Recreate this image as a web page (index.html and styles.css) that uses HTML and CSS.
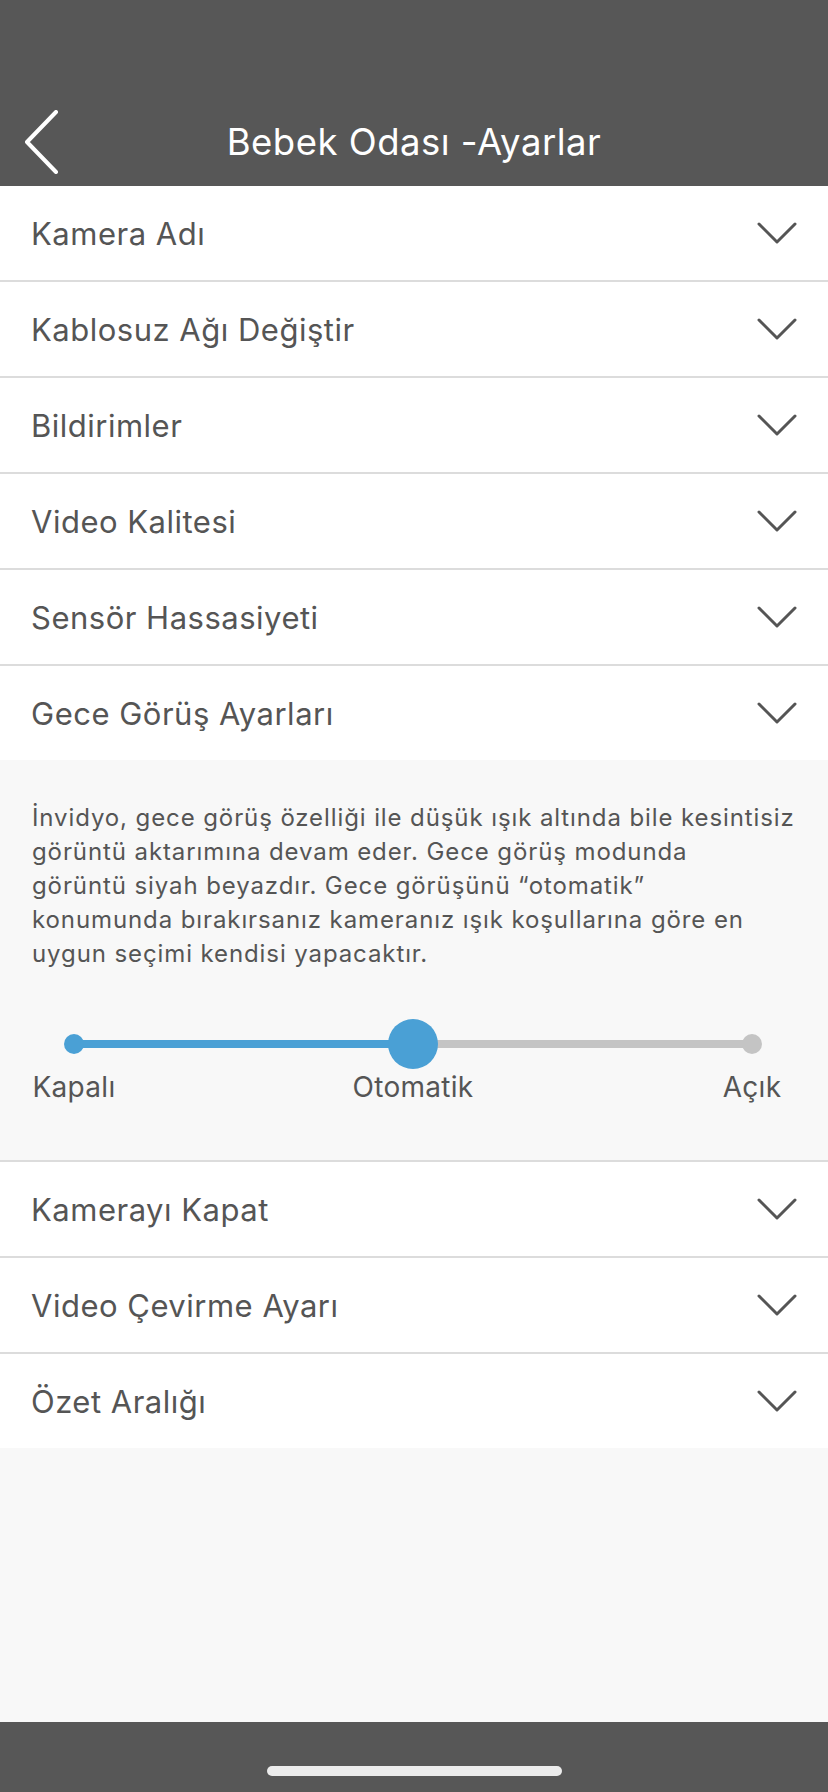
FILE: index.html
```html
<!DOCTYPE html>
<html lang="tr">
<head>
    <meta charset="UTF-8">
    <meta name="viewport" content="width=device-width, initial-scale=1.0">
    <title>Bebek Odası -Ayarlar</title>
    <link rel="stylesheet" href="styles.css">
</head>
<body>
    <header class="topbar">
        <div class="nav">
            <button class="back" type="button" aria-label="Geri">
                <svg width="36" height="64" viewBox="0 0 36 64">
                    <polyline points="33,2 4,32 33,62" fill="none" stroke="#fff" stroke-width="4" stroke-linecap="round" stroke-linejoin="round"/>
                </svg>
            </button>
            <h1 class="title">Bebek Odası -Ayarlar</h1>
            <span></span>
        </div>
    </header>

    <main class="settings">
        <div class="row"><span>Kamera Adı</span><svg class="chev" width="40" height="22" viewBox="0 0 40 22"><polyline points="2,2 20,20 38,2"/></svg></div>
        <div class="row"><span>Kablosuz Ağı Değiştir</span><svg class="chev" width="40" height="22" viewBox="0 0 40 22"><polyline points="2,2 20,20 38,2"/></svg></div>
        <div class="row"><span>Bildirimler</span><svg class="chev" width="40" height="22" viewBox="0 0 40 22"><polyline points="2,2 20,20 38,2"/></svg></div>
        <div class="row"><span>Video Kalitesi</span><svg class="chev" width="40" height="22" viewBox="0 0 40 22"><polyline points="2,2 20,20 38,2"/></svg></div>
        <div class="row"><span>Sensör Hassasiyeti</span><svg class="chev" width="40" height="22" viewBox="0 0 40 22"><polyline points="2,2 20,20 38,2"/></svg></div>
        <div class="row open"><span>Gece Görüş Ayarları</span><svg class="chev" width="40" height="22" viewBox="0 0 40 22"><polyline points="2,2 20,20 38,2"/></svg></div>

        <section class="panel">
            <p class="desc">İnvidyo, gece görüş özelliği ile düşük ışık altında bile kesintisiz<br>görüntü aktarımına devam eder. Gece görüş modunda<br>görüntü siyah beyazdır. Gece görüşünü “otomatik”<br>konumunda bırakırsanız kameranız ışık koşullarına göre en<br>uygun seçimi kendisi yapacaktır.</p>
            <div class="track"><span class="knob"></span></div>
            <div class="stops">
                <span class="stop">Kapalı</span>
                <span class="stop">Otomatik</span>
                <span class="stop">Açık</span>
            </div>
        </section>

        <div class="row"><span>Kamerayı Kapat</span><svg class="chev" width="40" height="22" viewBox="0 0 40 22"><polyline points="2,2 20,20 38,2"/></svg></div>
        <div class="row"><span>Video Çevirme Ayarı</span><svg class="chev" width="40" height="22" viewBox="0 0 40 22"><polyline points="2,2 20,20 38,2"/></svg></div>
        <div class="row last"><span>Özet Aralığı</span><svg class="chev" width="40" height="22" viewBox="0 0 40 22"><polyline points="2,2 20,20 38,2"/></svg></div>
    </main>

    <footer class="homebar"><span class="indicator"></span></footer>
</body>
</html>
```

FILE: styles.css
```css
* {
    box-sizing: border-box;
}

body {
    margin: 0;
    width: 828px;
    height: 1792px;
    background: #f8f8f8;
    font-family: Inter, "Liberation Sans", sans-serif;
    color: #555;
    display: flex;
    flex-direction: column;
}

.topbar {
    background: #575757;
    height: 186px;
    padding-top: 98px;
}

.nav {
    height: 88px;
    display: grid;
    grid-template-columns: 1fr auto 1fr;
    align-items: center;
}

.back {
    background: none;
    border: none;
    padding: 0 0 0 23px;
    display: flex;
    align-items: center;
    justify-self: start;
}

.title {
    margin: 0;
    color: #fff;
    font-weight: 400;
    font-size: 36.5px;
    letter-spacing: 0.5px;
}

.settings {
    flex: 1;
}

.row {
    height: 96px;
    background: #fff;
    border-bottom: 2px solid #dcdcdc;
    padding: 0 31px 0 31px;
    display: flex;
    align-items: center;
    justify-content: space-between;
    font-size: 31px;
    letter-spacing: 0.5px;
}

.row.open,
.row.last {
    border-bottom: none;
    height: 94px;
}

.chev polyline {
    fill: none;
    stroke: #555;
    stroke-width: 3;
    stroke-linecap: round;
    stroke-linejoin: round;
}

.panel {
    background: #f8f8f8;
    border-bottom: 2px solid #dcdcdc;
    padding: 41px 32px 56px;
}

.desc {
    margin: 0;
    font-size: 24px;
    letter-spacing: 0.9px;
    line-height: 34px;
    white-space: nowrap;
}

.track {
    position: relative;
    height: 8px;
    margin: 69px 44px 0 42px;
    border-radius: 4px;
    background: linear-gradient(to right, #4aa0d5 50%, #c4c4c4 50%);
}

.track::before,
.track::after {
    content: "";
    position: absolute;
    top: -6px;
    width: 20px;
    height: 20px;
    border-radius: 50%;
}

.track::before {
    left: -10px;
    background: #4aa0d5;
}

.track::after {
    right: -10px;
    background: #c4c4c4;
}

.knob {
    position: absolute;
    left: 50%;
    top: 50%;
    width: 50px;
    height: 50px;
    margin: -25px 0 0 -25px;
    border-radius: 50%;
    background: #4aa0d5;
}

.stops {
    display: flex;
    justify-content: space-between;
    margin: 22px 44px 0 42px;
}

.stop {
    width: 0;
    display: flex;
    justify-content: center;
    white-space: nowrap;
    font-size: 28px;
    letter-spacing: 0.3px;
    line-height: 34px;
}

.homebar {
    height: 70px;
    background: #575757;
    display: flex;
    justify-content: center;
    padding-top: 44px;
}

.indicator {
    width: 295px;
    height: 10px;
    border-radius: 5px;
    background: #ececec;
}
```
